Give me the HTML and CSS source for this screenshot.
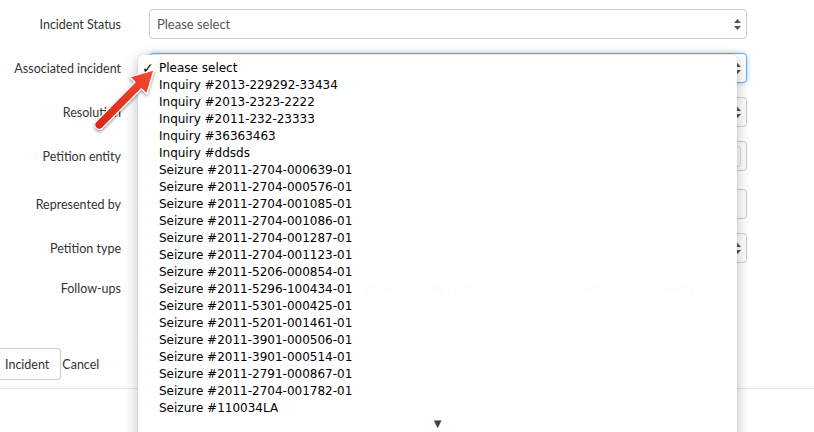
FILE: index.html
```html
<!DOCTYPE html>
<html lang="en">
<head>
  <meta charset="UTF-8" />
  <title>Incident</title>
  <link rel="stylesheet" href="styles.css">
</head>
<body>
  <div class="page">
    <!-- Formulario -->
    <form class="form">
      <div class="row">
        <label>Incident Status</label>
        <div class="control select">Please select
          <svg class="updown" width="7" height="11" viewBox="0 0 7 11"><path d="M3.5 0 L7 4 H0 Z M0 7 H7 L3.5 11 Z" fill="#555"/></svg>
        </div>
      </div>
      <div class="row">
        <label>Associated incident</label>
        <div class="control select focus">Please select
          <svg class="updown" width="7" height="11" viewBox="0 0 7 11"><path d="M3.5 0 L7 4 H0 Z M0 7 H7 L3.5 11 Z" fill="#555"/></svg>
        </div>
      </div>
      <div class="row">
        <label>Resolution</label>
        <div class="control select">Please select
          <svg class="updown" width="7" height="11" viewBox="0 0 7 11"><path d="M3.5 0 L7 4 H0 Z M0 7 H7 L3.5 11 Z" fill="#555"/></svg>
        </div>
      </div>
      <div class="row spaced">
        <label>Petition entity</label>
        <div class="control input"><span class="reset">reset</span></div>
      </div>
      <div class="row">
        <label>Represented by</label>
        <div class="control input"></div>
      </div>
      <div class="row">
        <label>Petition type</label>
        <div class="control select">Please select
          <svg class="updown" width="7" height="11" viewBox="0 0 7 11"><path d="M3.5 0 L7 4 H0 Z M0 7 H7 L3.5 11 Z" fill="#555"/></svg>
        </div>
      </div>
      <div class="row">
        <label>Follow-ups</label>
        <div class="followups">
          <span class="mini wide">Option</span>
          <span>by</span>
          <span class="mini date">Date</span>
          <span>with</span>
          <span class="mini prio">&mdash;</span>
          <span>priority</span>
        </div>
      </div>
    </form>

    <div class="actions">
      <button type="button" class="btn">Incident</button>
      <span class="cancel">Cancel</span>
    </div>
    <div class="rule"></div>

    <!-- Menú desplegable nativo -->
    <ul class="menu">
      <li class="checked">Please select</li>
      <li>Inquiry #2013-229292-33434</li>
      <li>Inquiry #2013-2323-2222</li>
      <li>Inquiry #2011-232-23333</li>
      <li>Inquiry #36363463</li>
      <li>Inquiry #ddsds</li>
      <li>Seizure #2011-2704-000639-01</li>
      <li>Seizure #2011-2704-000576-01</li>
      <li>Seizure #2011-2704-001085-01</li>
      <li>Seizure #2011-2704-001086-01</li>
      <li>Seizure #2011-2704-001287-01</li>
      <li>Seizure #2011-2704-001123-01</li>
      <li>Seizure #2011-5206-000854-01</li>
      <li>Seizure #2011-5296-100434-01</li>
      <li>Seizure #2011-5301-000425-01</li>
      <li>Seizure #2011-5201-001461-01</li>
      <li>Seizure #2011-3901-000506-01</li>
      <li>Seizure #2011-3901-000514-01</li>
      <li>Seizure #2011-2791-000867-01</li>
      <li>Seizure #2011-2704-001782-01</li>
      <li>Seizure #110034LA</li>
      <li class="more">&#9660;</li>
    </ul>

    <!-- Flecha roja -->
    <svg class="arrow" width="814" height="432" viewBox="0 0 814 432">
      <defs>
        <linearGradient id="red" x1="0" y1="1" x2="1" y2="0">
          <stop offset="0" stop-color="#d8261a"/>
          <stop offset="1" stop-color="#f24a31"/>
        </linearGradient>
        <filter id="sh" x="-20%" y="-20%" width="140%" height="140%">
          <feDropShadow dx="0" dy="1.5" stdDeviation="1.5" flood-color="#000" flood-opacity="0.45"/>
        </filter>
      </defs>
      <path d="M95.9 121.8 L135.1 82.2 L129.9 76.8 L154 70 L146.7 94 L141.5 88.6 L102.2 128.2 A4.5 4.5 0 0 1 95.9 121.8 Z"
            fill="url(#red)" stroke="#fff" stroke-width="1.2" stroke-linejoin="round" filter="url(#sh)"/>
    </svg>
  </div>
</body>
</html>
```

FILE: styles.css
```css
/* ===== General ===== */
body {
  margin: 0;
  background: #fff;
  font-family: Lato, "Open Sans", sans-serif;
  color: #333;
}
.page {
  position: relative;
  width: 814px;
  height: 432px;
  overflow: hidden;
}
/* ===== Formulario ===== */
.form {
  width: 747px;
  padding-top: 9px;
}
.row {
  display: grid;
  grid-template-columns: 121px 1fr;
  column-gap: 28px;
  align-items: center;
  margin-bottom: 14px;
}
.row.spaced {
  margin-bottom: 18px;
}
.row label {
  text-align: right;
  font-size: 12.5px;
  color: #333;
}
.control {
  position: relative;
  display: flex;
  align-items: center;
  height: 30px;
  box-sizing: border-box;
  padding: 0 7px;
  border: 1px solid #ccc;
  border-radius: 4px;
  font-size: 13px;
  color: #555;
}
.control.focus {
  border-color: #66afe9;
  box-shadow: 0 0 5px rgba(102, 175, 233, 0.6);
}
.updown {
  position: absolute;
  right: 5px;
  top: 9px;
}
.reset {
  margin-left: auto;
  margin-right: -2px;
  padding: 3px 6px;
  border: 1px solid #ddd;
  border-radius: 3px;
  font-size: 11px;
  color: #999;
}
/* Fila de seguimientos */
.followups {
  display: flex;
  align-items: center;
  gap: 4px;
  height: 22px;
  font-size: 12px;
  color: #555;
}
.mini {
  display: flex;
  align-items: center;
  height: 20px;
  padding: 0 4px;
  border: 1px solid #ccc;
  border-radius: 3px;
  box-sizing: border-box;
}
.mini.wide {
  width: 279px;
  justify-content: flex-end;
  padding-right: 34px;
}
.mini.date { width: 128px; }
.mini.prio { width: 44px; }
/* ===== Botones ===== */
.actions {
  display: flex;
  align-items: center;
  gap: 1px;
  margin-top: 49px;
  margin-left: -10px;
}
.btn {
  height: 32px;
  padding: 0 11px 0 14px;
  border: 1px solid #ccc;
  border-radius: 0 3px 3px 0;
  background: #fff;
  font-family: Lato, sans-serif;
  font-size: 12.5px;
  color: #333;
}
.cancel {
  font-size: 12.5px;
  color: #333;
}
.rule {
  margin-top: 8px;
  border-top: 1px solid #e5e5e5;
}
/* ===== Menú nativo ===== */
.menu {
  position: absolute;
  left: 138px;
  top: 55px;
  width: 599px;
  height: 400px;
  margin: 0;
  padding: 5px 0 0;
  list-style: none;
  background: rgba(255, 255, 255, 0.975);
  border-radius: 5px 5px 0 0;
  box-shadow: 0 4px 14px rgba(0, 0, 0, 0.28), 0 0 1px rgba(0, 0, 0, 0.3);
  font-family: "DejaVu Sans", sans-serif;
  font-size: 12px;
  color: #000;
}
.menu li {
  position: relative;
  height: 17px;
  line-height: 17px;
  padding-left: 21px;
  white-space: nowrap;
}
.menu li.checked::before {
  content: "\2713";
  position: absolute;
  left: 4px;
  font-size: 14px;
}
.menu li.more {
  height: 12px;
  line-height: 12px;
  padding-left: 0;
  margin-top: 1px;
  text-align: center;
  font-size: 10px;
  color: #444;
}
/* Flecha encima de todo */
.arrow {
  position: absolute;
  left: 0;
  top: 0;
  pointer-events: none;
}
```
